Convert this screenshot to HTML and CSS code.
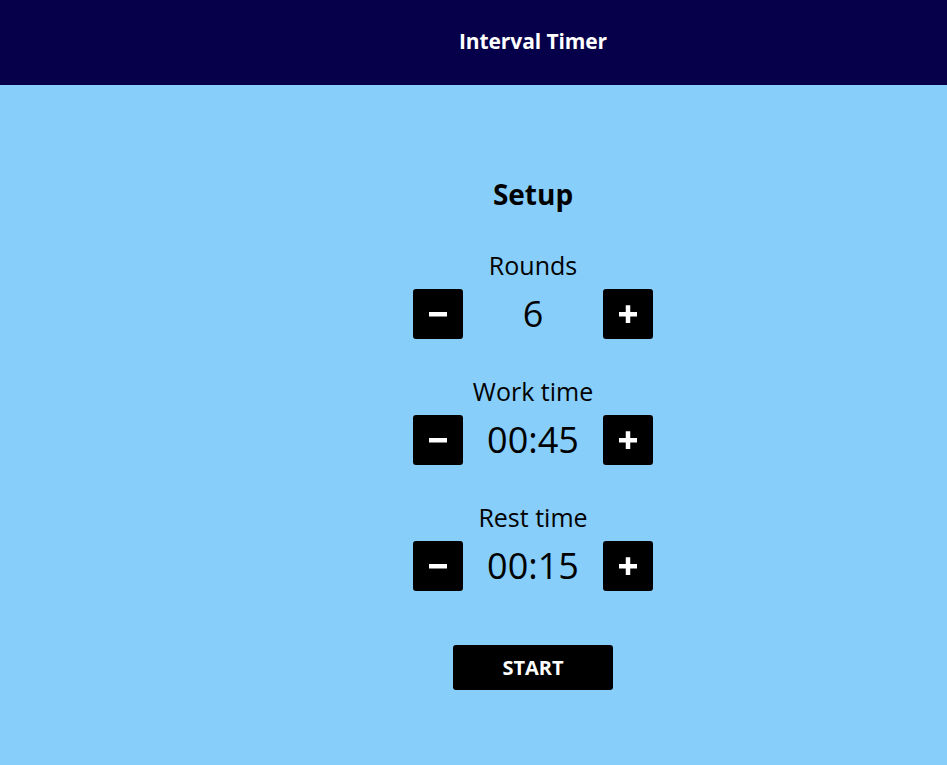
FILE: index.html
```html
<!DOCTYPE html>
<html lang="en">
<head>
<meta charset="utf-8">
<title>Interval Timer</title>
<link rel="stylesheet" href="styles.css">
</head>
<body>
<header class="topbar">
  <h1 class="topbar-title">Interval Timer</h1>
</header>
<main class="setup">
  <h2 class="setup-title">Setup</h2>
  <section class="field">
    <div class="field-label">Rounds</div>
    <div class="stepper">
      <button class="step-btn" aria-label="decrease"><svg viewBox="0 0 18 18" width="18" height="18"><rect x="0" y="7" width="18" height="4.5" fill="#fff"/></svg></button>
      <div class="step-value">6</div>
      <button class="step-btn" aria-label="increase"><svg viewBox="0 0 18 18" width="18" height="18"><rect x="0" y="7" width="18" height="4.5" fill="#fff"/><rect x="6.75" y="0.25" width="4.5" height="18" fill="#fff"/></svg></button>
    </div>
  </section>
  <section class="field">
    <div class="field-label">Work time</div>
    <div class="stepper">
      <button class="step-btn" aria-label="decrease"><svg viewBox="0 0 18 18" width="18" height="18"><rect x="0" y="7" width="18" height="4.5" fill="#fff"/></svg></button>
      <div class="step-value">00:45</div>
      <button class="step-btn" aria-label="increase"><svg viewBox="0 0 18 18" width="18" height="18"><rect x="0" y="7" width="18" height="4.5" fill="#fff"/><rect x="6.75" y="0.25" width="4.5" height="18" fill="#fff"/></svg></button>
    </div>
  </section>
  <section class="field">
    <div class="field-label">Rest time</div>
    <div class="stepper">
      <button class="step-btn" aria-label="decrease"><svg viewBox="0 0 18 18" width="18" height="18"><rect x="0" y="7" width="18" height="4.5" fill="#fff"/></svg></button>
      <div class="step-value">00:15</div>
      <button class="step-btn" aria-label="increase"><svg viewBox="0 0 18 18" width="18" height="18"><rect x="0" y="7" width="18" height="4.5" fill="#fff"/><rect x="6.75" y="0.25" width="4.5" height="18" fill="#fff"/></svg></button>
    </div>
  </section>
  <button class="start-btn">START</button>
</main>
</body>
</html>
```
FILE: styles.css
```css
* { box-sizing: border-box; }
html, body {
  margin: 0;
  padding: 0;
  background: #87cefa;
  font-family: "Open Sans", "Noto Sans", sans-serif;
  color: #000;
}
body { min-height: 765px; }
.topbar {
  height: 85px;
  background: #06004a;
  display: flex;
  align-items: center;
  justify-content: center;
  padding: 0 0 4px 119px;
}
.topbar-title {
  margin: 0;
  color: #fff;
  font-size: 21px;
  font-weight: 700;
  line-height: 28px;
  letter-spacing: -0.1px;
}
.setup {
  display: flex;
  flex-direction: column;
  align-items: center;
  padding: 91px 0 0 119px;
}
.setup-title {
  margin: 0 0 38px;
  font-size: 28px;
  font-weight: 700;
  line-height: 36px;
}
.field {
  display: flex;
  flex-direction: column;
  align-items: center;
  margin-bottom: 37px;
}
.field-label {
  font-size: 25px;
  line-height: 30px;
  height: 30px;
  margin-bottom: 9px;
}
.stepper {
  display: flex;
  align-items: center;
}
.step-btn {
  width: 50px;
  height: 50px;
  border: 0;
  border-radius: 3px;
  background: #000;
  padding: 0;
  display: flex;
  align-items: center;
  justify-content: center;
}
.step-btn svg { display: block; }
.step-value {
  width: 140px;
  text-align: center;
  font-size: 36px;
  line-height: 50px;
}
.start-btn {
  margin-top: 17px;
  width: 160px;
  height: 45px;
  border: 0;
  border-radius: 3px;
  background: #000;
  color: #fff;
  font-family: inherit;
  font-size: 20px;
  font-weight: 700;
}
```
